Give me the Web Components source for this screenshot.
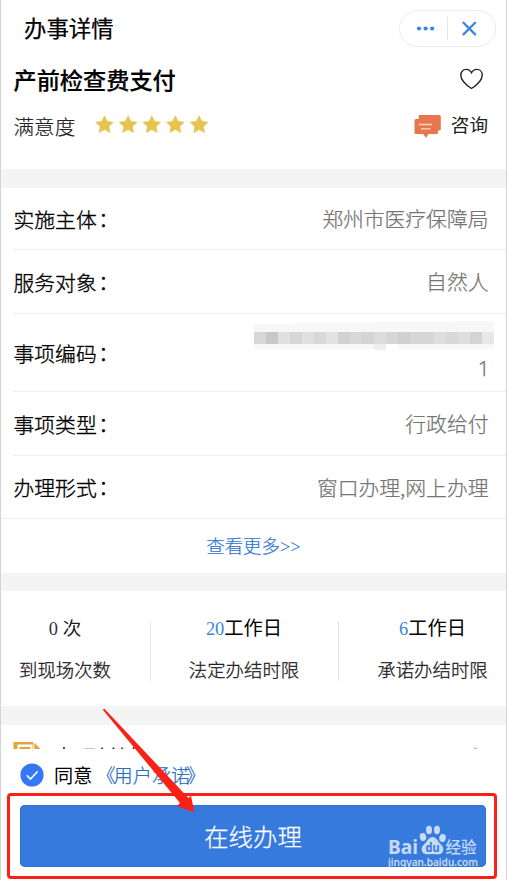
<!DOCTYPE html>
<html lang="zh-CN">
<head>
<meta charset="utf-8">
<title>办事详情</title>
<style>
body{margin:0;background:#fff;overflow:hidden;font-family:"Noto Sans CJK SC","Noto Sans",sans-serif;color:#111}
</style>
</head>
<body>
<service-page></service-page>
<script>
function define(name, html){
  const t=document.createElement('template');
  t.innerHTML=html;
  customElements.define(name,class extends HTMLElement{
    constructor(){super();this.attachShadow({mode:'open'}).append(t.content.cloneNode(true));}
  });
}

define('app-header',`<style>
:host{display:flex;height:56px;box-sizing:border-box;padding:0 10px 0 23px;align-items:center;justify-content:space-between}
h1{margin:0 0 2px;font-size:22.4px;line-height:32px;font-weight:400;color:#000;-webkit-text-stroke:.25px #000}
.pill{display:flex;box-sizing:border-box;width:97px;height:37px;border:1px solid #ececec;border-radius:19px;align-items:center}
.pill svg{flex:none}
</style><h1><slot></slot></h1>
<div class="pill"><svg width="95" height="35" viewBox="0 0 95 35"><g fill="#3a86dc"><circle cx="19" cy="17.5" r="2.1"/><circle cx="25.6" cy="17.5" r="2.1"/><circle cx="32.2" cy="17.5" r="2.1"/></g><path d="M47.5 6v23" stroke="#e4e4e4"/><path d="M63.5 11.8l11.6 11.6M75.1 11.8L63.5 23.4" stroke="#3a86dc" stroke-width="2.3" stroke-linecap="round"/></svg></div>`);

define('item-title',`<style>
:host{display:flex;height:47px;padding:0 22px 0 12.500px;align-items:center;justify-content:space-between}
h2{margin:0 0 2px;font-size:23.2px;line-height:34px;font-weight:500;color:#000;-webkit-text-stroke:.2px #000}
svg{margin-bottom:2px}
</style><h2><slot></slot></h2>
<svg width="25" height="22" viewBox="0 0 25 22"><path d="M12.5 20.5C8 17.5 1.8 12.4 1.8 7.2c0-3.5 2.4-5.8 5.4-5.8 2.3 0 4.2 1.2 5.3 3.4 1.1-2.2 3-3.4 5.3-3.4 3 0 5.4 2.3 5.4 5.8 0 5.2-6.2 10.3-10.7 13.3z" fill="none" stroke="#222" stroke-width="1.4"/></svg>`);

define('rating-row',`<style>
:host{display:flex;height:66px;box-sizing:border-box;padding:8px 18px 0 12.500px;align-items:flex-start}
.l{font-size:20.6px;line-height:30px;color:#222;font-weight:300;-webkit-text-stroke:.2px #222;width:81.500px}
.stars{flex:1;padding-top:4px}
.stars svg,.chat svg{display:block}
.chat{display:flex;gap:10px;font-size:18.6px;line-height:25px;color:#222}
.chat svg{margin-top:3px}
</style><span class="l">满意度</span>
<div class="stars"><svg width="116" height="20" viewBox="0 0 116 20"><defs><path id="s" d="M9 .8l2.7 5.5 6.1.9-4.400 4.300 1 6L9 14.600l-5.400 2.900 1-6L.2 7.200l6.100-.9z" fill="#e6c44f" stroke="#e6c44f" stroke-width=".6" stroke-linejoin="round"/></defs><use href="#s" x=".5"/><use href="#s" x="24.1"/><use href="#s" x="47.8"/><use href="#s" x="71.4"/><use href="#s" x="95.1"/></svg></div>
<div class="chat"><svg width="27" height="25" viewBox="0 0 27 25"><path d="M6 1h19.3q1.5 0 1.500 1.500v12.400q0 1.500-1.500 1.500H24v2q0 1.500-1.500 1.500h-8L12 24l-2.800-4.100H2q-1.500 0-1.500-1.500V6.500Q.5 5 2 5h2.700V2.300Q4.700 1 6 1z" fill="#e8764d"/><path d="M5 10.500h13M7 14.800h9.500" stroke="#fbd9cb" stroke-width="1.300"/></svg><span>咨询</span></div>`);

define('gap-band',`<style>:host{display:block;height:var(--h,18px);background:#f4f4f4}</style>`);

define('info-row',`<style>
:host{display:flex;height:var(--h,64px);box-sizing:border-box;border-bottom:1px solid #eee;margin-left:var(--ml,12px);padding:0 17.500px var(--pb,0) var(--pl,.5px);align-items:center;justify-content:space-between;font-size:20.800px;line-height:30px;color:#000}
.k{display:flex;gap:1.500px;font-weight:300;-webkit-text-stroke:.35px #000}
.c{margin-top:-1px}
.v{display:flex;flex-direction:column;align-items:flex-end;margin-bottom:1px;color:#757575;font-weight:300;-webkit-text-stroke:.25px #757575}
</style><span class="k"><slot name="label"></slot><span class="c">：</span></span><span class="v"><slot></slot></span>`);

define('masked-code',`<style>
:host{display:block;margin:-1px -5px 1px 0;height:30px}
svg{display:block}
</style><svg width="240" height="30" shape-rendering="crispEdges"></svg>`);

define('more-link',`<style>
:host{display:flex;height:54px;align-items:center;justify-content:center;color:#2f74cf;font-size:18.400px;line-height:28px;font-weight:300;-webkit-text-stroke:.2px #2f74cf}
i{font-style:normal;font-family:"Liberation Serif",serif;-webkit-text-stroke:0}
</style><span><slot></slot><i>&gt;&gt;</i></span>`);

define('stat-cell',`<style>
:host{display:flex;flex-direction:column;align-items:center;box-sizing:border-box;height:60px;font-size:18.400px;line-height:28px;color:#222;white-space:nowrap}
div{height:28px}
div:first-of-type{margin:-8px 0 14px}
.n{color:var(--n,#3a86dc);font-family:"Liberation Serif",serif}
.u{color:var(--u,#000);font-size:var(--us,18.500px)}
.d{font-weight:300;-webkit-text-stroke:.3px #222}
</style><div><span class="n"><slot name="n"></slot></span><span class="u"><slot name="u"></slot></span></div><div class="d"><slot></slot></div>`);

define('stats-panel',`<style>
:host{display:grid;grid-template-columns:150px 188px 167px;height:115px;box-sizing:border-box;padding-top:30px}
::slotted(*){border-right:1px solid #e6e6e6}
::slotted(:last-child){border:0;padding-left:20px}
</style><slot></slot>`);

define('materials-peek',`<style>
:host{display:flex;height:24px;overflow:hidden;padding:0 27px 0 12px;align-items:flex-start}
svg{flex:none}
span{font-size:20.700px;line-height:30px;margin:16px auto 0 14px;color:#111}
</style><svg width="28" height="50" viewBox="0 0 28 50"><path d="M.5 17H20.500l7 7v20H.5z" fill="#e0a53c"/><path d="M4.500 19.500h15v5h-15z" fill="#fff"/><path d="M6.500 22h11v3h-11z" fill="#e0a53c"/><path d="M20.800 17v7" stroke="#fff"/></svg><span>办理材料</span><svg width="6" height="30" viewBox="0 0 6 30"><path d="M1 22.500l4 2" stroke="#aaa"/></svg>`);

define('agree-row',`<style>
:host{display:flex;height:44px;box-sizing:border-box;padding:12px 0 0 19px;font-size:19.200px;line-height:28px;color:#000}
svg{flex:none;margin:2px 10px 0 0}
a{display:flex;margin-left:2px;color:#2f6fc0;font-weight:300;-webkit-text-stroke:.25px #2f6fc0}
.o{margin:0 -2px 0 2px}.c{margin-left:-4px}
</style><svg width="24" height="24" viewBox="0 0 24 24"><circle cx="12" cy="12" r="11.600" fill="#3478f6"/><path d="M6.800 12.300l3.600 3.700 7.200-7.500" fill="none" stroke="#fff" stroke-width="1.600"/></svg><span>同意</span><a><span class="o">《</span><slot></slot><span class="c">》</span></a>`);

define('action-bar',`<style>
:host{display:block;box-sizing:border-box;height:86px;margin:0 9px 0 6px;border:3px solid #fd2016;border-radius:4px;padding:9px 8px 9px 10px}
button{display:flex;width:100%;height:62px;border:0;border-radius:5px;background:#367ade;color:#fff;align-items:center;justify-content:center;font:300 24.400px/36px "Noto Sans CJK SC",sans-serif;-webkit-text-stroke:.25px #fff;padding:0;box-shadow:inset 0 0 0 1px #2f73d2}
</style><button><slot></slot></button>`);

define('site-mark',`<style>
:host{position:absolute;left:388px;top:825px;width:92px;height:44px;display:block}
svg{display:block}
</style><svg width="92" height="44" viewBox="0 0 92 44"><g fill="#fff" fill-opacity=".72"><text x="0" y="28.500" font-family="Noto Sans" font-weight="700" font-size="20" textLength="30" lengthAdjust="spacingAndGlyphs">Bai</text><ellipse cx="35" cy="12" rx="3.200" ry="4" transform="rotate(-12 35 12)"/><ellipse cx="41" cy="5" rx="3" ry="4.200"/><ellipse cx="49" cy="5" rx="3" ry="4.200"/><ellipse cx="54.500" cy="13" rx="3.200" ry="4" transform="rotate(12 54.500 13)"/><path d="M44.500 12c4 0 5 4 8 7s3.500 5 2 8c-2 3.500-6 2-10 2s-8 1.500-10-2c-1.500-3-1-5 2-8s4-7 8-7z"/><text x="57.500" y="27.500" font-family="Noto Sans CJK SC" font-weight="500" font-size="15.500" textLength="31">经验</text><text x="0" y="41" font-family="Noto Sans" font-weight="500" font-size="10.500" textLength="90" lengthAdjust="spacingAndGlyphs" stroke="#fff" stroke-opacity=".4" stroke-width=".3">jingyan.baidu.com</text></g><text x="37.500" y="27" font-family="Noto Sans" font-weight="700" font-size="12" fill="#367ade" textLength="14" lengthAdjust="spacingAndGlyphs">du</text></svg>`);

define('pointer-arrow',`<style>
:host{position:absolute;left:100px;top:706px;display:block}
svg{display:block}
</style><svg width="98" height="110" viewBox="100 706 98 110"><path d="M102.600 709.500L104.400 708.800L188.500 798L191 795.500L194.300 812.500L177 806L180 803z" fill="#fd2016"/></svg>`);

define('service-page',`<style>
:host{display:block;position:relative;box-sizing:border-box;width:507px;height:880px;border:solid #d4d4d4;border-width:0 1px;overflow:hidden}
site-mark,pointer-arrow{margin-left:-1px}
.code{font-family:"Noto Sans",sans-serif;font-weight:300;margin:1px -1px 0 0}
</style>
<app-header>办事详情</app-header>
<item-title>产前检查费支付</item-title>
<rating-row></rating-row>
<gap-band style="--h:19px"></gap-band>
<info-row style="--h:62px"><span slot="label">实施主体</span>郑州市医疗保障局</info-row>
<info-row><span slot="label">服务对象</span>自然人</info-row>
<info-row style="--h:78px"><span slot="label">事项编码</span><masked-code></masked-code><span class="code">1</span></info-row>
<info-row><span slot="label">事项类型</span>行政给付</info-row>
<info-row style="--h:63px;--ml:0;--pl:12.500px"><span slot="label">办理形式</span>窗口办理,网上办理</info-row>
<more-link>查看更多</more-link>
<gap-band></gap-band>
<stats-panel>
<stat-cell style="--n:#333;--u:#222;padding-right:21px"><span slot="n">0&nbsp;</span><span slot="u">次</span>到现场次数</stat-cell>
<stat-cell style="--us:19.300px;padding-right:1px"><span slot="n">20</span><span slot="u">工作日</span>法定办结时限</stat-cell>
<stat-cell style="--us:19.300px"><span slot="n">6</span><span slot="u">工作日</span>承诺办结时限</stat-cell>
</stats-panel>
<gap-band style="--h:19px"></gap-band>
<materials-peek></materials-peek>
<agree-row>用户承诺</agree-row>
<action-bar>在线办理</action-bar>
<pointer-arrow></pointer-arrow>
<site-mark></site-mark>`);

const shades=[215,200,224,214,224,216,226,210,216,212,220,214,208,214,214,222,216,222,212,232];
function paintMask(root){
  for(const el of root.querySelectorAll('masked-code')){
    const svg=el.shadowRoot.querySelector('svg');
    let s='<path d="M0 3L240 0V28H0z" fill="#f7f7f7"/>';
    shades.forEach((c,i)=>{s+='<rect x="'+i*12+'" y="11" width="12" height="12" fill="rgb('+c+','+c+','+c+')"/>';});
    s+='<rect x="120" y="23" width="12" height="6" fill="#eee"/><rect x="132" y="23" width="12" height="7" fill="#fff"/>';
    svg.innerHTML=s;
  }
}
paintMask(document.querySelector('service-page').shadowRoot);
</script>
</body>
</html>
